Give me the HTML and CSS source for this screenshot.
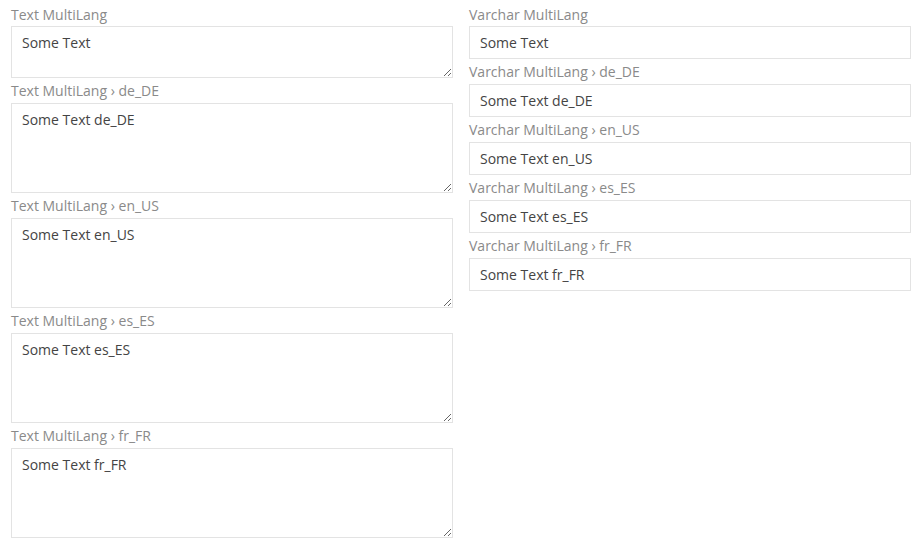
FILE: index.html
```html
<!DOCTYPE html>
<html>
<head>
<meta charset="utf-8">
<link rel="stylesheet" href="styles.css">
</head>
<body>
<div class="page">
  <div class="col">
    <div class="field">
      <div class="label">Text MultiLang</div>
      <textarea class="ta ta-short">Some Text</textarea>
    </div>
    <div class="field">
      <div class="label">Text MultiLang › de_DE</div>
      <textarea class="ta">Some Text de_DE</textarea>
    </div>
    <div class="field">
      <div class="label">Text MultiLang › en_US</div>
      <textarea class="ta">Some Text en_US</textarea>
    </div>
    <div class="field">
      <div class="label">Text MultiLang › es_ES</div>
      <textarea class="ta">Some Text es_ES</textarea>
    </div>
    <div class="field">
      <div class="label">Text MultiLang › fr_FR</div>
      <textarea class="ta">Some Text fr_FR</textarea>
    </div>
  </div>
  <div class="col">
    <div class="field">
      <div class="label">Varchar MultiLang</div>
      <input class="in" type="text" value="Some Text">
    </div>
    <div class="field">
      <div class="label">Varchar MultiLang › de_DE</div>
      <input class="in" type="text" value="Some Text de_DE">
    </div>
    <div class="field">
      <div class="label">Varchar MultiLang › en_US</div>
      <input class="in" type="text" value="Some Text en_US">
    </div>
    <div class="field">
      <div class="label">Varchar MultiLang › es_ES</div>
      <input class="in" type="text" value="Some Text es_ES">
    </div>
    <div class="field">
      <div class="label">Varchar MultiLang › fr_FR</div>
      <input class="in" type="text" value="Some Text fr_FR">
    </div>
  </div>
</div>
</body>
</html>
```
FILE: styles.css
```css
html, body {
  margin: 0;
  padding: 0;
  background: #fff;
}
body {
  font-family: "Open Sans", "Liberation Sans", sans-serif;
  font-size: 14px;
  color: #444;
}
.page {
  display: grid;
  grid-template-columns: 442px 442px;
  column-gap: 16px;
  padding-left: 11px;
  padding-top: 1px;
  align-items: start;
}
.col {
  display: flex;
  flex-direction: column;
}
.field {
  display: flex;
  flex-direction: column;
}
.label {
  color: #8a8a8a;
  font-size: 14px;
  line-height: 20px;
  height: 20px;
  margin-top: 3px;
  margin-bottom: 2px;
}
.field:first-child .label {
  margin-top: 4px;
  margin-bottom: 1px;
}
.ta, .in {
  display: block;
  box-sizing: border-box;
  width: 442px;
  margin: 0;
  border: 1px solid #e3e3e3;
  background: #fff;
  font-family: "Open Sans", "Liberation Sans", sans-serif;
  font-size: 14px;
  color: #444;
  outline: none;
}
.ta {
  height: 90px;
  padding: 6px 10px;
  line-height: 20px;
  resize: vertical;
}
.ta-short {
  height: 52px;
}
.in {
  height: 33px;
  padding: 0 10px;
  line-height: 20px;
}
```
